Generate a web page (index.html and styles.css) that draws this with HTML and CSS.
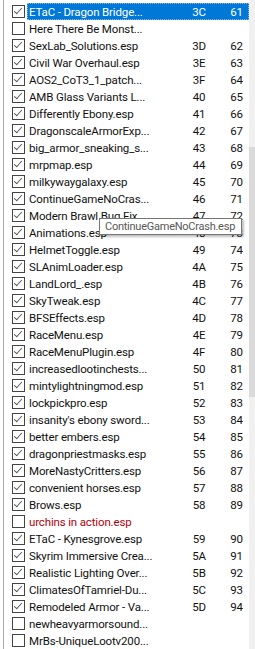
FILE: index.html
```html
<!DOCTYPE html>
<html>
<head>
<meta charset="utf-8">
<link rel="stylesheet" href="styles.css">
</head>
<body>
<div class="view">
  <div class="list">
    <div class="row sel"><span class="cb on"></span><span class="cell"><span class="name">ETaC - Dragon Bridge...</span><span class="hex">3C</span><span class="num">61</span></span></div>
    <div class="row"><span class="cb"></span><span class="cell"><span class="name">Here There Be Monst...</span><span class="hex"></span><span class="num"></span></span></div>
    <div class="row"><span class="cb on"></span><span class="cell"><span class="name">SexLab_Solutions.esp</span><span class="hex">3D</span><span class="num">62</span></span></div>
    <div class="row"><span class="cb on"></span><span class="cell"><span class="name">Civil War Overhaul.esp</span><span class="hex">3E</span><span class="num">63</span></span></div>
    <div class="row"><span class="cb on"></span><span class="cell"><span class="name">AOS2_CoT3_1_patch...</span><span class="hex">3F</span><span class="num">64</span></span></div>
    <div class="row"><span class="cb on"></span><span class="cell"><span class="name">AMB Glass Variants L...</span><span class="hex">40</span><span class="num">65</span></span></div>
    <div class="row"><span class="cb on"></span><span class="cell"><span class="name">Differently Ebony.esp</span><span class="hex">41</span><span class="num">66</span></span></div>
    <div class="row"><span class="cb on"></span><span class="cell"><span class="name">DragonscaleArmorExp...</span><span class="hex">42</span><span class="num">67</span></span></div>
    <div class="row"><span class="cb on"></span><span class="cell"><span class="name">big_armor_sneaking_s...</span><span class="hex">43</span><span class="num">68</span></span></div>
    <div class="row"><span class="cb on"></span><span class="cell"><span class="name">mrpmap.esp</span><span class="hex">44</span><span class="num">69</span></span></div>
    <div class="row"><span class="cb on"></span><span class="cell"><span class="name">milkywaygalaxy.esp</span><span class="hex">45</span><span class="num">70</span></span></div>
    <div class="row"><span class="cb on"></span><span class="cell"><span class="name">ContinueGameNoCras...</span><span class="hex">46</span><span class="num">71</span></span></div>
    <div class="row"><span class="cb on"></span><span class="cell"><span class="name">Modern Brawl Bug Fix</span><span class="hex">47</span><span class="num">72</span></span></div>
    <div class="row"><span class="cb on"></span><span class="cell"><span class="name">Animations.esp</span><span class="hex">48</span><span class="num">73</span></span></div>
    <div class="row"><span class="cb on"></span><span class="cell"><span class="name">HelmetToggle.esp</span><span class="hex">49</span><span class="num">74</span></span></div>
    <div class="row"><span class="cb on"></span><span class="cell"><span class="name">SLAnimLoader.esp</span><span class="hex">4A</span><span class="num">75</span></span></div>
    <div class="row"><span class="cb on"></span><span class="cell"><span class="name">LandLord_.esp</span><span class="hex">4B</span><span class="num">76</span></span></div>
    <div class="row"><span class="cb on"></span><span class="cell"><span class="name">SkyTweak.esp</span><span class="hex">4C</span><span class="num">77</span></span></div>
    <div class="row"><span class="cb on"></span><span class="cell"><span class="name">BFSEffects.esp</span><span class="hex">4D</span><span class="num">78</span></span></div>
    <div class="row"><span class="cb on"></span><span class="cell"><span class="name">RaceMenu.esp</span><span class="hex">4E</span><span class="num">79</span></span></div>
    <div class="row"><span class="cb on"></span><span class="cell"><span class="name">RaceMenuPlugin.esp</span><span class="hex">4F</span><span class="num">80</span></span></div>
    <div class="row"><span class="cb on"></span><span class="cell"><span class="name">increasedlootinchests...</span><span class="hex">50</span><span class="num">81</span></span></div>
    <div class="row"><span class="cb on"></span><span class="cell"><span class="name">mintylightningmod.esp</span><span class="hex">51</span><span class="num">82</span></span></div>
    <div class="row"><span class="cb on"></span><span class="cell"><span class="name">lockpickpro.esp</span><span class="hex">52</span><span class="num">83</span></span></div>
    <div class="row"><span class="cb on"></span><span class="cell"><span class="name">insanity's ebony sword...</span><span class="hex">53</span><span class="num">84</span></span></div>
    <div class="row"><span class="cb on"></span><span class="cell"><span class="name">better embers.esp</span><span class="hex">54</span><span class="num">85</span></span></div>
    <div class="row"><span class="cb on"></span><span class="cell"><span class="name">dragonpriestmasks.esp</span><span class="hex">55</span><span class="num">86</span></span></div>
    <div class="row"><span class="cb on"></span><span class="cell"><span class="name">MoreNastyCritters.esp</span><span class="hex">56</span><span class="num">87</span></span></div>
    <div class="row"><span class="cb on"></span><span class="cell"><span class="name">convenient horses.esp</span><span class="hex">57</span><span class="num">88</span></span></div>
    <div class="row"><span class="cb on"></span><span class="cell"><span class="name">Brows.esp</span><span class="hex">58</span><span class="num">89</span></span></div>
    <div class="row"><span class="cb"></span><span class="cell"><span class="name red">urchins in action.esp</span><span class="hex"></span><span class="num"></span></span></div>
    <div class="row"><span class="cb on"></span><span class="cell"><span class="name">ETaC - Kynesgrove.esp</span><span class="hex">59</span><span class="num">90</span></span></div>
    <div class="row"><span class="cb on"></span><span class="cell"><span class="name">Skyrim Immersive Crea...</span><span class="hex">5A</span><span class="num">91</span></span></div>
    <div class="row"><span class="cb on"></span><span class="cell"><span class="name">Realistic Lighting Over...</span><span class="hex">5B</span><span class="num">92</span></span></div>
    <div class="row"><span class="cb on"></span><span class="cell"><span class="name">ClimatesOfTamriel-Du...</span><span class="hex">5C</span><span class="num">93</span></span></div>
    <div class="row"><span class="cb on"></span><span class="cell"><span class="name">Remodeled Armor - Va...</span><span class="hex">5D</span><span class="num">94</span></span></div>
    <div class="row"><span class="cb"></span><span class="cell"><span class="name">newheavyarmorsound...</span><span class="hex"></span><span class="num"></span></span></div>
    <div class="row"><span class="cb"></span><span class="cell"><span class="name">MrBs-UniqueLootv200...</span><span class="hex"></span><span class="num"></span></span></div>
  </div>
  <div class="scroll"><div class="thumb"></div></div>
  <div class="tip">ContinueGameNoCrash.esp</div>
</div>
</body>
</html>
```
FILE: styles.css
```css
html, body {
  margin: 0;
  padding: 0;
  background: #fff;
}
.view {
  position: relative;
  width: 255px;
  height: 649px;
  overflow: hidden;
  display: flex;
  font-family: Roboto, "Liberation Sans", sans-serif;
  font-size: 11.5px;
  color: #111;
}
.list {
  margin-left: 3px;
  border-left: 1px solid #a9a9a9;
  width: 245px;
  padding-top: 3px;
  display: flex;
  flex-direction: column;
}
.row {
  height: 17px;
  flex: none;
  display: flex;
  align-items: center;
  padding-left: 8px;
}
.cb {
  width: 11px;
  height: 11px;
  border: 1px solid #444;
  background: #fff;
  flex: none;
  margin-right: 2px;
  position: relative;
}
.cb.on::after {
  content: "";
  position: absolute;
  left: 3px;
  top: 0;
  width: 3px;
  height: 7px;
  border-right: 1px solid #555;
  border-bottom: 1px solid #555;
  transform: rotate(42deg);
}
.cell {
  flex: 1;
  height: 17px;
  line-height: 18px;
  display: flex;
  overflow: hidden;
  letter-spacing: -0.15px;
}
.name {
  width: 147px;
  padding-left: 2px;
  box-sizing: border-box;
  white-space: nowrap;
  overflow: hidden;
}
.name.red {
  color: #b0000f;
}
.hex {
  width: 50px;
  text-align: center;
}
.num {
  width: 25px;
  text-align: center;
}
.sel .cell {
  background: #0078d7;
  color: #fff;
  outline: 1px dotted #8fb8e0;
  outline-offset: -1px;
}
.scroll {
  flex: 1;
  background: #f0f0f0;
  position: relative;
}
.thumb {
  position: absolute;
  left: 0;
  right: 0;
  top: 147px;
  height: 250px;
  background: #dadada;
}
.tip {
  position: absolute;
  left: 99px;
  top: 218px;
  width: 143px;
  height: 17px;
  box-sizing: border-box;
  border: 1px solid #767676;
  background: #fff;
  color: #575757;
  line-height: 15px;
  padding-left: 5px;
  font-size: 11px;
  letter-spacing: -0.25px;
  white-space: nowrap;
  box-shadow: 2px 2px 2px rgba(0,0,0,0.25);
}
```
